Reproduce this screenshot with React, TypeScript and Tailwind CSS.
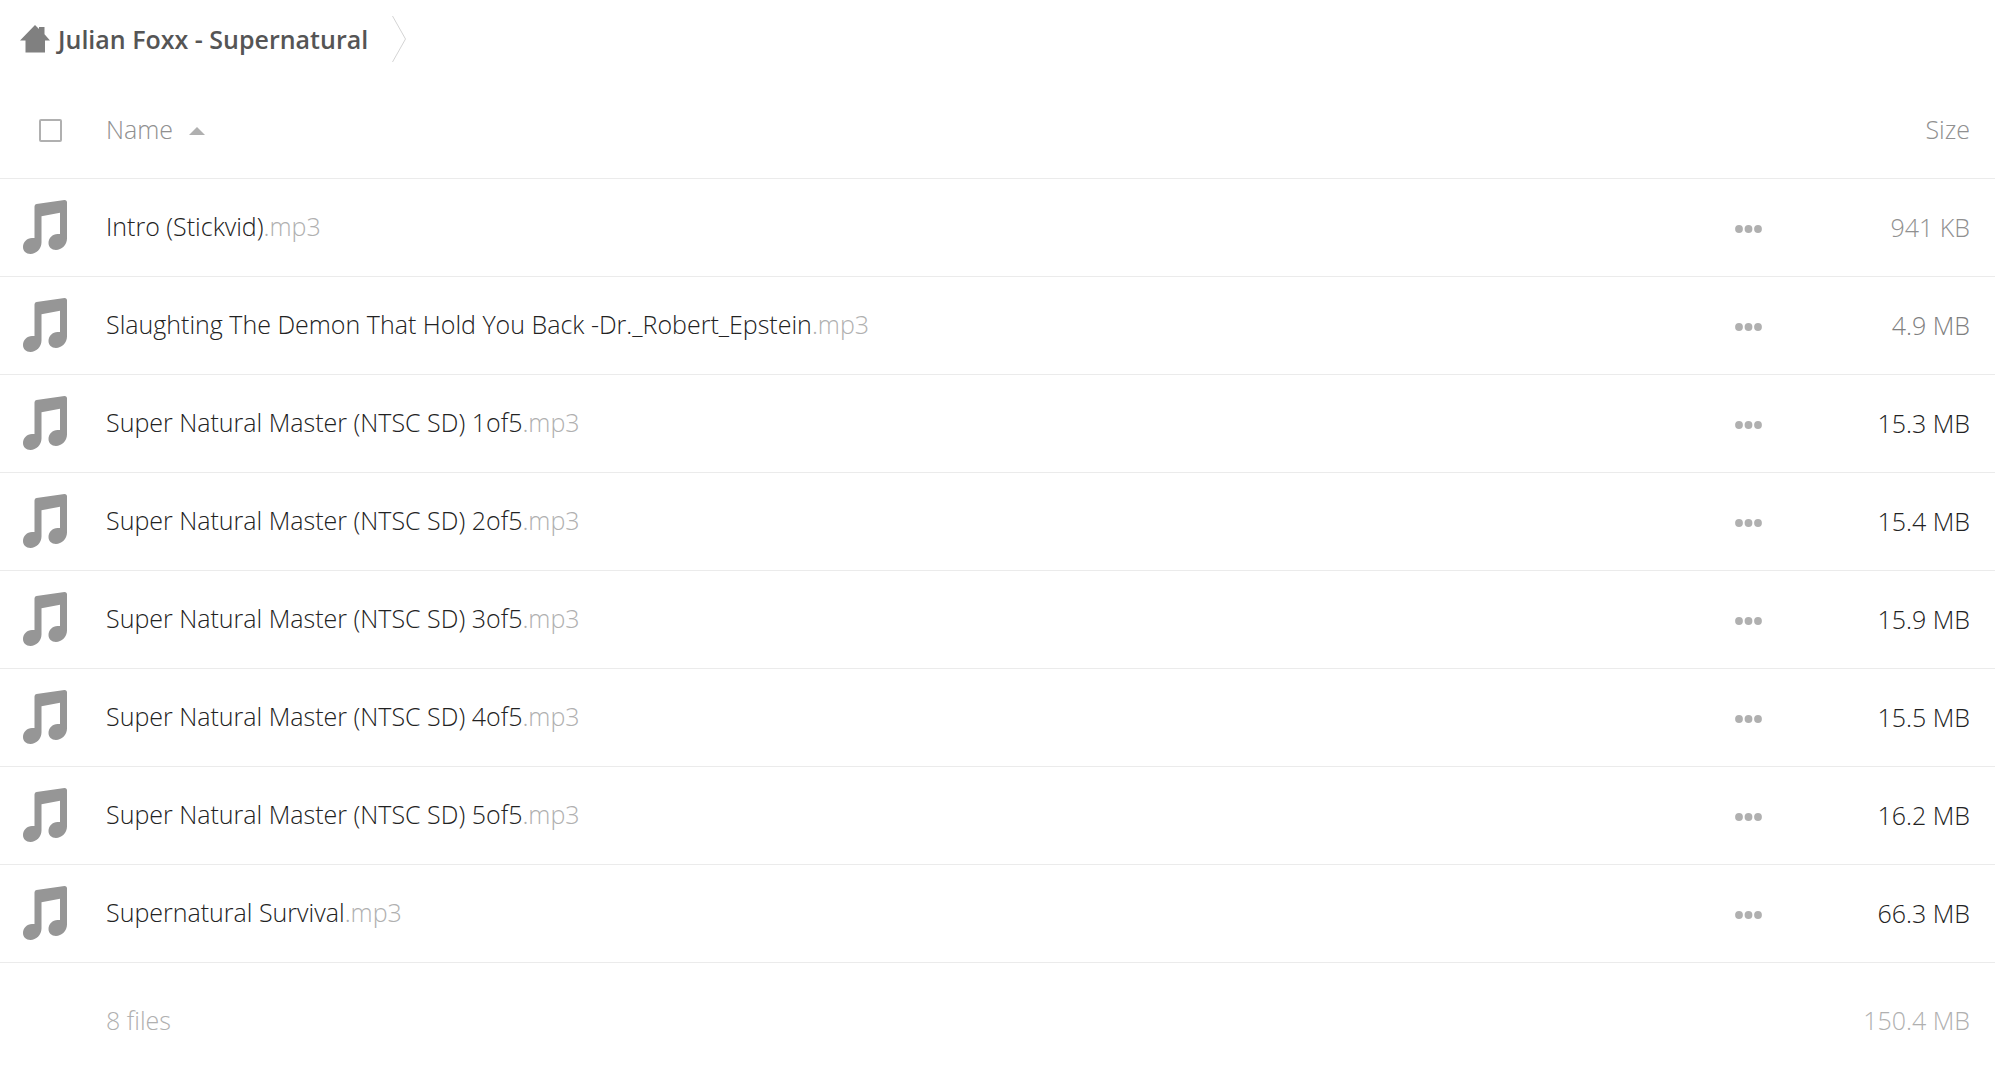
import { useState } from 'react'

type FileItem = {
    name: string
    ext: string
    size: string
    sizeClass: string
}

const files: FileItem[] = [
    { name: 'Intro (Stickvid)', ext: '.mp3', size: '941 KB', sizeClass: 'text-[#909090]' },
    { name: 'Slaughting The Demon That Hold You Back -Dr._Robert_Epstein', ext: '.mp3', size: '4.9 MB', sizeClass: 'text-[#808080]' },
    { name: 'Super Natural Master (NTSC SD) 1of5', ext: '.mp3', size: '15.3 MB', sizeClass: 'text-[#222]' },
    { name: 'Super Natural Master (NTSC SD) 2of5', ext: '.mp3', size: '15.4 MB', sizeClass: 'text-[#222]' },
    { name: 'Super Natural Master (NTSC SD) 3of5', ext: '.mp3', size: '15.9 MB', sizeClass: 'text-[#222]' },
    { name: 'Super Natural Master (NTSC SD) 4of5', ext: '.mp3', size: '15.5 MB', sizeClass: 'text-[#222]' },
    { name: 'Super Natural Master (NTSC SD) 5of5', ext: '.mp3', size: '16.2 MB', sizeClass: 'text-[#222]' },
    { name: 'Supernatural Survival', ext: '.mp3', size: '66.3 MB', sizeClass: 'text-[#222]' },
]

function HomeIcon() {
    return (
        <svg width="30" height="28" viewBox="0 0 30 28" fill="#808080" aria-hidden="true">
            <path d="M0 15.5 15 0l4 4V2h5.500v7.300L30 15.500h-5V27.500H5.500V15.500Z" />
        </svg>
    )
}

function MusicIcon() {
    return (
        <svg width="44" height="54" viewBox="0 0 44 54" fill="#969696" aria-hidden="true">
            <path
                fillRule="evenodd"
                d="M13.500 3.900 41.500 0Q44 0 44 2.500V38.500C44 45 38.500 50 33 50C28.500 50 25.500 47 25.500 43C25.500 38 29.500 34 34.500 34H37V12.800L18.500 16.200V42.500C18.500 49 13 54 7.500 54C3 54 0 51 0 47C0 42 4 38 9 38H11.500V6.500Q11.500 4.300 13.500 3.900Z"
            />
        </svg>
    )
}

function DotsIcon() {
    return (
        <svg width="27" height="8" viewBox="0 0 27 8" fill="#b0b0b0" aria-hidden="true">
            <circle cx="4" cy="4" r="3.900" />
            <circle cx="13.500" cy="4" r="3.900" />
            <circle cx="23" cy="4" r="3.900" />
        </svg>
    )
}

export default function App() {
    const [selectAll, setSelectAll] = useState(false)

    return (
        <div className="min-h-screen bg-white font-['Open_Sans',sans-serif] text-[25px] leading-9 font-light text-[#222]">
            <nav aria-label="Breadcrumb" className="flex h-[78px] items-center pl-5">
                <a href="#" className="flex items-center gap-2 font-semibold text-[#555]">
                    <HomeIcon />
                    Julian Foxx - Supernatural
                </a>
                <svg className="ml-6" width="14" height="46" viewBox="0 0 14 46" fill="none" stroke="#d4d4d4" aria-hidden="true">
                    <path d="M0.500 0 13.500 23 0.500 46" />
                </svg>
            </nav>

            <table className="w-full border-collapse">
                <thead>
                    <tr className="h-[100px] border-b border-[#ebebeb] text-[#909090]">
                        <th className="w-[106px] p-0 pt-1.5 pl-[39px]">
                            <input
                                type="checkbox"
                                aria-label="Select all files"
                                checked={selectAll}
                                onChange={(e) => setSelectAll(e.target.checked)}
                                className="block size-[23px] appearance-none rounded-xs border-2 border-[#b0b0b0] bg-white checked:bg-[#b0b0b0]"
                            />
                        </th>
                        <th className="p-0 pt-0.5 text-left font-light">
                            <button type="button" className="flex items-center gap-4">
                                Name
                                <svg className="mt-1" width="16" height="8" viewBox="0 0 16 8" fill="#b0b0b0" aria-hidden="true">
                                    <path d="M8 0 16 8H0Z" />
                                </svg>
                            </button>
                        </th>
                        <th className="w-20 p-0" aria-label="Actions"></th>
                        <th className="w-[207px] p-0 pt-0.5 pr-[25px] text-right font-light">
                            <button type="button">Size</button>
                        </th>
                    </tr>
                </thead>
                <tbody>
                    {files.map((file) => (
                        <tr key={file.name} className="h-[98px] border-b border-[#ebebeb]">
                            <td className="p-0 pl-[23px]">
                                <MusicIcon />
                            </td>
                            <td className="p-0 pb-0.5">
                                <a href="#">
                                    {file.name}
                                    <span className="text-[#b0b0b0]">{file.ext}</span>
                                </a>
                            </td>
                            <td className="p-0 pt-1">
                                <button type="button" aria-label="More actions" className="mx-auto flex size-10 items-center justify-center">
                                    <DotsIcon />
                                </button>
                            </td>
                            <td className={`p-0 pr-[25px] text-right ${file.sizeClass}`}>{file.size}</td>
                        </tr>
                    ))}
                </tbody>
                <tfoot>
                    <tr className="h-[115px] text-[#b0b0b0]">
                        <td className="p-0"></td>
                        <td className="p-0">8 files</td>
                        <td className="p-0"></td>
                        <td className="p-0 pr-[25px] text-right">150.4 MB</td>
                    </tr>
                </tfoot>
            </table>
        </div>
    )
}
